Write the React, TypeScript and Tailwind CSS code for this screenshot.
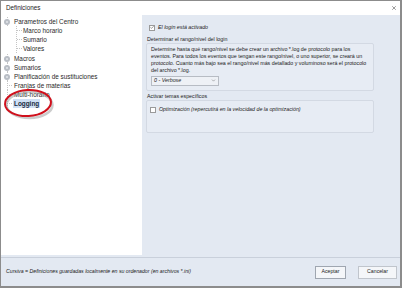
import { X, ChevronDown, Check } from "lucide-react";

const font = { fontFamily: '"Liberation Sans", Arial, sans-serif' };

function Expander() {
  return (
    <span className="relative flex h-[9px] w-[10px] items-center justify-center">
      <span className="absolute left-[4.5px] top-0 h-full border-l border-dotted border-[#c4c4c4]" />
      <span className="relative flex h-[6px] w-[6px] items-center justify-center rounded-full bg-[#b9bec5]">
        <span className="h-[2px] w-[2px] rounded-full bg-[#e4e6ea]" />
      </span>
    </span>
  );
}

function Leaf() {
  return (
    <span className="relative flex h-[9px] w-[10px] items-center">
      <span className="absolute left-[4.5px] top-0 h-full border-l border-dotted border-[#c4c4c4]" />
      <span className="ml-[5px] w-[5px] border-t border-dotted border-[#c4c4c4]" />
    </span>
  );
}

function Row({ label, expander, selected }: { label: string; expander?: boolean; selected?: boolean }) {
  return (
    <div className="flex h-[9px] items-center pl-[1px]">
      {expander ? <Expander /> : <Leaf />}
      <span
        className={
          "ml-[1px] px-[1px] leading-[9px] " +
          (selected ? "bg-[#cfe0f5] font-bold text-[#1a2a40]" : "text-[#2a2a2a]")
        }
      >
        {label}
      </span>
    </div>
  );
}

function Child({ label }: { label: string }) {
  return (
    <div className="flex h-[9px] items-center">
      <span className="w-[5px] border-t border-dotted border-[#c4c4c4]" />
      <span className="ml-[1px] leading-[9px] text-[#2a2a2a]">{label}</span>
    </div>
  );
}

function Box({ checked }: { checked?: boolean }) {
  return (
    <span className="flex h-[6px] w-[6px] items-center justify-center border border-[#9a9a9a] bg-white">
      {checked && <Check className="h-[5px] w-[5px] text-[#333]" strokeWidth={3} />}
    </span>
  );
}

export default function App() {
  return (
    <div
      style={font}
      className="relative flex h-[288px] w-[402px] flex-col overflow-hidden border-l border-r-2 border-b-2 border-t border-[#8c8c8c] bg-[#e3e9f2]"
    >
      {/* title */}
      <div className="flex h-[14px] items-center justify-between bg-white pl-[5px] pr-[3px]">
        <span className="text-[6.3px] text-[#222]">Definiciones</span>
        <X className="h-[6px] w-[6px] text-[#222]" strokeWidth={1.8} />
      </div>

      <div className="flex flex-1">
        {/* tree */}
        <div className="mb-[2px] w-[141px] bg-white pt-[2px] text-[6.4px]">
          <Row label="Parametros del Centro" expander />
          <div className="ml-[15px] border-l border-dotted border-[#c4c4c4]">
            <Child label="Marco horario" />
            <Child label="Sumario" />
            <Child label="Valores" />
          </div>
          <div className="h-[1px]" />
          <Row label="Macros" expander />
          <Row label="Sumarios" expander />
          <Row label="Planificación de sustituciones" expander />
          <Row label="Franjas de materias" />
          <Row label="Multi-horario" />
          <Row label="Logging" selected />
        </div>

        {/* settings */}
        <div className="flex-1 pl-[4px] pt-[9px] text-[5.3px] text-[#222]">
          <div className="flex items-center gap-[3px] pl-[3px]">
            <Box checked />
            <span className="italic">El login está activado</span>
          </div>

          <div className="mt-[4px] pl-[1px] leading-[7px]">Determinar el rango/nivel del login</div>
          <div className="w-[228px] rounded-[2px] border border-[#d3d9e3] bg-[#e7ecf4] px-[4px] pb-[4px] pt-[2px]">
            <p className="leading-[7px]">
              Determine hasta qué rango/nivel se debe crear un archivo *.log de protocolo para los eventos. Para
              todos los eventos que tengan este rango/nivel, o uno superior, se creará un protocolo. Cuanto más bajo
              sea el rango/nivel más detallado y voluminoso será el protocolo del archivo *.log.
            </p>
            <div className="mt-[2px] flex h-[10px] w-[68px] items-center justify-between border border-[#b7bcc4] bg-[#eef1f6] pl-[2px] pr-[2px]">
              <span className="italic">0 - Verbose</span>
              <ChevronDown className="h-[5px] w-[5px] text-[#555]" strokeWidth={2} />
            </div>
          </div>

          <div className="mt-[2px] pl-[1px] leading-[7px]">Activar temas específicos</div>
          <div className="h-[33px] w-[228px] rounded-[2px] border border-[#d3d9e3] bg-[#e7ecf4] px-[3px] pt-[5px]">
            <div className="flex items-center gap-[3px]">
              <Box />
              <span className="italic">Optimización (repercutirá en la velocidad de la optimización)</span>
            </div>
          </div>
        </div>
      </div>

      {/* footer */}
      <div className="flex h-[29px] items-center justify-between border-t border-[#c9d0db] pl-[5px] pr-[3px] text-[5.2px] text-[#222]">
        <span className="italic">Cursiva = Definiciones guardadas localmente en su ordenador (en archivos *.ini)</span>
        <div className="flex gap-[12px]">
          <button className="h-[13px] w-[31px] border border-[#9fa6b0] bg-[#f4f6f9]">Aceptar</button>
          <button className="h-[13px] w-[39px] border border-[#c0c5cc] bg-[#f4f6f9]">Cancelar</button>
        </div>
      </div>

      {/* red annotation */}
      <svg className="absolute left-[2px] top-[86px]" width="52" height="34" viewBox="0 0 52 34">
        <ellipse cx="26.5" cy="18" rx="23" ry="13" fill="none" stroke="#9a9a9a" strokeOpacity="0.5" strokeWidth="2.5" />
        <ellipse cx="25" cy="16" rx="23" ry="13" fill="none" stroke="#d0101c" strokeWidth="2" transform="rotate(-3 25 16)" />
      </svg>
    </div>
  );
}
